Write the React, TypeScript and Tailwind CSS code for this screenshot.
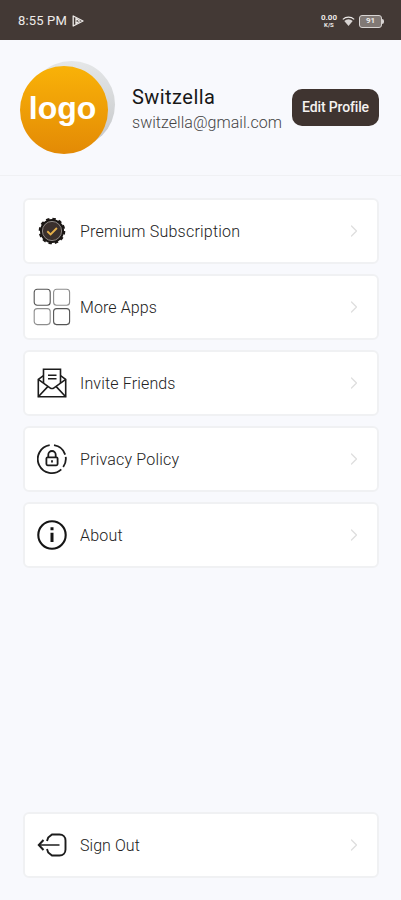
import React from 'react';
import { ChevronRight } from 'lucide-react';

type MenuItem = {
  label: string;
  icon: React.ReactNode;
  tracking: string;
};

function PremiumIcon() {
  return (
    <svg width="28" height="28" viewBox="0 0 28 28" fill="none">
      <circle cx="14" cy="14" r="12" fill="#1b1715" />
      <circle cx="14" cy="14" r="12.2" stroke="#1b1715" strokeWidth="2.2" strokeDasharray="3.4 2.99" />
      <circle cx="14" cy="14" r="9.6" fill="#3a302d" stroke="#9b9592" strokeWidth="0.9" />
      <path d="M9.3 14.2l3.3 3.2 6.3-6.4" stroke="#e5b04a" strokeWidth="1.9" />
    </svg>
  );
}

function AppsIcon() {
  return (
    <svg width="38" height="38" viewBox="0 0 38 38" fill="none" strokeWidth="1.1">
      <rect x="1.2" y="1.2" width="16" height="16" rx="3" stroke="#555" />
      <rect x="20.6" y="1.2" width="16" height="16" rx="3" stroke="#8d8d8d" />
      <rect x="1.2" y="20.6" width="16" height="16" rx="3" stroke="#8d8d8d" />
      <rect x="20.6" y="20.6" width="16" height="16" rx="3" stroke="#555" />
    </svg>
  );
}

function InviteIcon() {
  return (
    <svg width="30" height="30" viewBox="0 0 30 30" fill="none" stroke="#1c1c1c" strokeWidth="1.6">
      <path d="M6.5 15V1.3h17V15" />
      <path d="M6.5 7.6L1.3 11.3v17.4h27.4V11.3l-5.2-3.7" />
      <path d="M1.3 11.3L13 19.8q2 1.4 4 0l11.7-8.5" />
      <path d="M1.3 28.7L11 18.4M28.7 28.7L19 18.4" />
      <path d="M11 7.3h8.5M11 10.7h8.5" />
    </svg>
  );
}

function PrivacyIcon() {
  return (
    <svg width="30" height="30" viewBox="0 0 30 30" fill="none" stroke="#1c1c1c" strokeWidth="1.8">
      <path d="M12.7 1.2A14 14 0 1 0 24.3 25.3" />
      <path d="M17 1.2A14 14 0 0 1 28.2 10.6" />
      <path d="M28.7 12.8A14 14 0 0 1 26.2 23" />
      <rect x="9.4" y="13.3" width="11.2" height="8" rx="1.2" />
      <path d="M11.3 13.3v-2.6a3.7 3.7 0 0 1 7.4 0v2.6M15 16.2v2.2" />
    </svg>
  );
}

function AboutIcon() {
  return (
    <svg width="30" height="30" viewBox="0 0 30 30" fill="none">
      <circle cx="15" cy="15" r="13.7" stroke="#151515" strokeWidth="2.1" />
      <path d="M15 7.2v3M15 12.8v9.2" stroke="#151515" strokeWidth="3" />
    </svg>
  );
}

function SignOutIcon() {
  return (
    <svg width="30" height="24" viewBox="0 0 30 24" fill="none" stroke="#1c1c1c" strokeWidth="1.9">
      <path d="M10 8l1.2-3.4L15 1.5h7.5c3.5 0 6 2.5 6 6v9c0 3.5-2.5 6-6 6H15l-3.8-3L10 16" />
      <path d="M22.5 12H2" strokeWidth="1.5" />
      <path d="M6.5 7L1.8 12l4.7 5" strokeWidth="2" />
    </svg>
  );
}

const menuItems: MenuItem[] = [
  { label: 'Premium Subscription', icon: <PremiumIcon />, tracking: 'tracking-[0.22px]' },
  { label: 'More Apps', icon: <AppsIcon />, tracking: 'tracking-[0.1px]' },
  { label: 'Invite Friends', icon: <InviteIcon />, tracking: 'tracking-[0.15px]' },
  { label: 'Privacy Policy', icon: <PrivacyIcon />, tracking: 'tracking-[0.2px]' },
  { label: 'About', icon: <AboutIcon />, tracking: 'tracking-[0.2px]' },
];

function MenuRow({ item }: { item: MenuItem }) {
  return (
    <button className="flex h-[66px] w-full items-center rounded-md border-2 border-[#f0f1f3] bg-white pr-[13px] pl-2 text-left">
      <span className="flex w-[38px] shrink-0 items-center justify-center">{item.icon}</span>
      <span className={`mt-0.5 ml-[9px] flex-1 text-base font-light whitespace-nowrap text-[#222] ${item.tracking}`}>
        {item.label}
      </span>
      <ChevronRight className="h-5 w-5 text-[#dedede]" strokeWidth={1.5} />
    </button>
  );
}

function StatusBar() {
  return (
    <div className="flex h-10 items-center justify-between bg-[#433935] pt-0.5 pr-[17px] pl-[18px] text-[#eeebe9]">
      <div className="flex items-center gap-[5px]">
        <span className="text-[13px] tracking-[0.15px]">8:55 PM</span>
        <svg width="12" height="12" viewBox="0 0 12 12" fill="none" stroke="#eeebe9" strokeWidth="1.3" strokeLinejoin="round">
          <path d="M1.2 1l9.8 5-9.8 5z" />
          <path d="M4 3.5v5l3.5-2.5z" />
        </svg>
      </div>
      <div className="flex items-center">
        <div className="flex flex-col items-center font-bold">
          <span className="text-[8px] leading-[7px]">0.00</span>
          <span className="text-[6px] leading-[7px]">K/S</span>
        </div>
        <svg className="ml-[5px]" width="13" height="11" viewBox="0 0 13 11" fill="none" stroke="#eeebe9">
          <path d="M0.8 3.3a8.5 8.5 0 0 1 11.4 0" strokeWidth="1.1" />
          <path d="M2.3 5a6.2 6.2 0 0 1 8.4 0L6.5 10z" fill="#d8d4d2" stroke="none" />
        </svg>
        <div className="ml-1 flex h-[13px] w-[23px] items-center justify-center rounded-[3px] border border-[#d8d4d2] bg-[#817975] text-[8px] leading-none font-bold">
          91
        </div>
        <div className="h-[5px] w-[2px] rounded-r-sm bg-[#d8d4d2]" />
      </div>
    </div>
  );
}

function Avatar() {
  return (
    <div className="relative h-[93px] w-[95px] shrink-0">
      <div className="absolute top-0 right-0 h-[87px] w-[87px] rounded-full bg-gradient-to-b from-[#e5e7e8] to-[#c4c6c8]" />
      <div className="absolute bottom-0 left-0 flex h-[88px] w-[88px] items-center justify-center rounded-full bg-gradient-to-b from-[#f9b208] to-[#e38a05]">
        <span className="-mt-1 -ml-[3px] font-['Liberation_Sans',sans-serif] text-[32px] leading-none font-bold text-white">logo</span>
      </div>
    </div>
  );
}

function App() {
  return (
    <div className="flex h-[900px] w-full flex-col bg-[#f8f9fd] font-['Roboto',sans-serif]">
      <StatusBar />

      {/* Profile */}
      <div className="flex h-[136px] items-center border-b border-[#f0f1f4] pr-[22px] pl-5">
        <Avatar />
        <div className="mt-1 ml-[17px] flex-1 whitespace-nowrap">
          <h1 className="text-[20px] leading-[26px] tracking-[0.45px] text-[#171717]">Switzella</h1>
          <p className="text-base leading-[26px] font-light tracking-[0.03px] text-[#444]">switzella@gmail.com</p>
        </div>
        <button className="h-[37px] w-[87px] shrink-0 rounded-[10px] bg-[#3f3430] text-[14px] font-medium tracking-[-0.15px] whitespace-nowrap text-[#f5f2f0]">
          Edit Profile
        </button>
      </div>

      {/* Menu */}
      <div className="flex flex-1 flex-col gap-2.5 pt-[22px] pr-[22px] pb-[22px] pl-[23px]">
        {menuItems.map((item) => (
          <MenuRow item={item} key={item.label} />
        ))}
        <div className="mt-auto">
          <MenuRow item={{ label: 'Sign Out', icon: <SignOutIcon />, tracking: 'tracking-[0.05px]' }} />
        </div>
      </div>
    </div>
  );
}

export default App;
